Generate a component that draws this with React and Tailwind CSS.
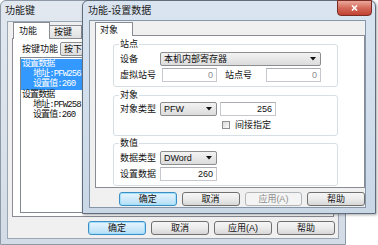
import React from "react";

const F = "font-['Liberation_Sans','Noto_Sans_CJK_SC',sans-serif]";

function Arrow() {
  return (
    <svg width="6" height="4" viewBox="0 0 6 4" className="shrink-0">
      <path d="M0 0 L6 0 L3 3.5 Z" fill="#111" />
    </svg>
  );
}

function Combo({ text, className }) {
  return (
    <div
      className={`flex items-center justify-between h-[14px] border border-[#8b8d8f] rounded-[2px] bg-gradient-to-b from-[#f3f3f3] to-[#dcdcdc] pl-[3px] pr-[4px] text-[9px] leading-[10px] text-[#111] ${className}`}
    >
      <span>{text}</span>
      <Arrow />
    </div>
  );
}

function Input({ text, className, dim }) {
  return (
    <div
      className={`flex items-center justify-end h-[14px] border border-[#c5c8cc] border-t-[#abadb3] bg-white pr-[3px] text-[9px] leading-[10px] ${dim ? "text-[#8a8a8a]" : "text-[#111]"} ${className}`}
    >
      {text}
    </div>
  );
}

function Btn({ text, kind }) {
  if (kind === "focus")
    return (
      <div className="w-[58px] h-[14px] rounded-[3px] border border-[#3d8ec4] bg-gradient-to-b from-[#e8f5fd] to-[#b6def6] shadow-[inset_0_0_0_1px_#9fe0fb] flex items-center justify-center text-[9px] leading-[10px] text-[#111]">
        {text}
      </div>
    );
  if (kind === "disabled")
    return (
      <div className="w-[58px] h-[14px] rounded-[3px] border border-[#b3b6b9] bg-[#f4f4f4] flex items-center justify-center text-[9px] leading-[10px] text-[#8d8d8d]">
        {text}
      </div>
    );
  return (
    <div className="w-[58px] h-[14px] rounded-[3px] border border-[#707070] bg-gradient-to-b from-[#f6f6f6] via-[#ebebeb] to-[#d7d7d7] flex items-center justify-center text-[9px] leading-[10px] text-[#111]">
      {text}
    </div>
  );
}

function Group({ label, className, children }) {
  return (
    <div className={`relative ml-[17px] w-[225px] border border-[#d5dfe5] rounded-[3px] ${className}`}>
      <span className="absolute left-[5px] top-[-6px] bg-white px-[1px] text-[9px] leading-[10px] text-[#111]">
        {label}
      </span>
      {children}
    </div>
  );
}

function Label({ text, className }) {
  return <span className={`text-[9px] leading-[10px] text-[#111] ${className}`}>{text}</span>;
}

function BackWindow() {
  return (
    <div className="absolute left-0 top-0 w-[346px] h-[245px] rounded-t-[6px] border border-[#8d99a6] bg-gradient-to-b from-[#e2e8ef] to-[#d3dce6] flex flex-col">
      <div className="h-[20px] flex items-center pl-[4px] text-[10px] leading-[12px] text-[#222]">功能键</div>
      <div className="flex-1 mx-[6px] mb-[5px] border border-[#9aa6b3] bg-[#f0f0f0] flex flex-col">
        <div className="px-[4px] flex flex-col">
          <div className="flex items-end h-[16px] pl-[1px]">
            <div className="relative z-10 h-[17px] -mb-px w-[37px] bg-white border border-b-0 border-[#898c95] flex items-center pl-[5px] text-[9px] leading-[10px] text-[#111]">
              功能
            </div>
            <div className="h-[13px] w-[32px] bg-gradient-to-b from-[#f3f3f3] to-[#e0e0e0] border border-b-0 border-l-0 border-[#898c95] flex items-center pl-[4px] text-[9px] leading-[10px] text-[#111]">
              按键
            </div>
          </div>
          <div className="h-[179px] bg-white border border-[#898c95] flex flex-col">
            <div className="flex items-center pt-[3px] pl-[9px]">
              <Label text="按键功能" className="w-[38px]" />
              <Combo text="按下" className="w-[70px]" />
            </div>
            <div className="flex-1 mt-[1px] mb-[3px] ml-[7px] w-[140px] border border-[#828790] bg-white pt-[1px] font-['Liberation_Mono','Noto_Sans_CJK_SC',monospace] text-[9px] leading-[10px] tracking-[-0.9px]">
              <div className="bg-[#3399ff] text-white pb-[1px]">
                <div className="pl-[1px]">设置数据</div>
                <div className="pl-[12px]">地址:PFW256</div>
                <div className="pl-[12px]">设置值:260</div>
              </div>
              <div className="text-[#111]">
                <div className="pl-[1px]">设置数据</div>
                <div className="pl-[12px]">地址:PFW258</div>
                <div className="pl-[12px]">设置值:260</div>
              </div>
            </div>
          </div>
        </div>
        <div className="flex gap-[5px] pl-[80px] mt-[4px]">
          <Btn text="确定" kind="focus" />
          <Btn text="取消" />
          <Btn text="应用(A)" />
          <Btn text="帮助" />
        </div>
      </div>
    </div>
  );
}

function FrontWindow() {
  return (
    <div className="absolute left-[82px] top-0 w-[294px] h-[214px] rounded-t-[6px] border border-[#5f6d7c] bg-gradient-to-b from-[#d9e4f0] to-[#c9d7e7] flex flex-col shadow-[1px_1px_3px_rgba(0,0,0,0.35)]">
      <div className="h-[19px] flex items-start justify-between pl-[5px]">
        <span className="mt-[4px] text-[10px] leading-[12px] text-[#222]">功能-设置数据</span>
        <div className="-mt-px mr-[3px] w-[35px] h-[16px] rounded-b-[4px] border border-[#7a2c24] bg-gradient-to-b from-[#e9a99c] via-[#d3695a] to-[#c2412f] flex items-center justify-center">
          <svg width="7" height="6" viewBox="0 0 7 6">
            <path d="M1 0.5 L6 5.5 M6 0.5 L1 5.5" stroke="#fff" strokeWidth="1.6" />
          </svg>
        </div>
      </div>
      <div className="flex-1 ml-[6px] mr-[9px] mb-[5px] border border-[#8596a9] bg-[#f0f0f0] flex flex-col">
        <div className="pl-[5px] flex flex-col">
          <div className="flex items-end h-[14px] pt-[2px]">
            <div className="relative z-10 h-[14px] -mb-px w-[38px] bg-white border border-b-0 border-[#898c95] flex items-center pl-[4px] text-[9px] leading-[10px] text-[#111]">
              对象
            </div>
          </div>
          <div className="h-[153px] bg-white border border-[#898c95] flex flex-col">
            <Group label="站点" className="mt-[8px] h-[43px] pt-[7px] pl-[6px]">
              <div className="flex items-center">
                <Label text="设备" className="w-[40px]" />
                <Combo text="本机内部寄存器" className="w-[161px]" />
              </div>
              <div className="flex items-center mt-[2px]">
                <Label text="虚拟站号" className="w-[42px]" />
                <Input text="0" dim className="w-[55px]" />
                <Label text="站点号" className="ml-[8px] w-[41px]" />
                <Input text="0" dim className="w-[55px]" />
              </div>
            </Group>
            <Group label="对象" className="mt-[8px] h-[41px] pt-[6px] pl-[6px]">
              <div className="flex items-center">
                <Label text="对象类型" className="w-[40px]" />
                <Combo text="PFW" className="w-[57px]" />
                <Input text="256" className="ml-[3px] w-[56px]" />
              </div>
              <div className="flex items-center mt-[4px] pl-[102px]">
                <div className="w-[8px] h-[8px] border border-[#8f8f8f] bg-gradient-to-br from-[#dcdcdc] to-[#f8f8f8]" />
                <Label text="间接指定" className="ml-[5px]" />
              </div>
            </Group>
            <Group label="数值" className="mt-[7px] h-[43px] pt-[7px] pl-[6px]">
              <div className="flex items-center">
                <Label text="数据类型" className="w-[40px]" />
                <Combo text="DWord" className="w-[57px]" />
              </div>
              <div className="flex items-center mt-[2px]">
                <Label text="设置数据" className="w-[40px]" />
                <Input text="260" className="w-[57px]" />
              </div>
            </Group>
          </div>
        </div>
        <div className="flex gap-[5px] pl-[29px] mt-[4px]">
          <Btn text="确定" kind="focus" />
          <Btn text="取消" />
          <Btn text="应用(A)" kind="disabled" />
          <Btn text="帮助" />
        </div>
      </div>
    </div>
  );
}

export default function App() {
  return (
    <div className={`relative w-[378px] h-[245px] bg-white overflow-hidden ${F}`}>
      <BackWindow />
      <FrontWindow />
    </div>
  );
}
